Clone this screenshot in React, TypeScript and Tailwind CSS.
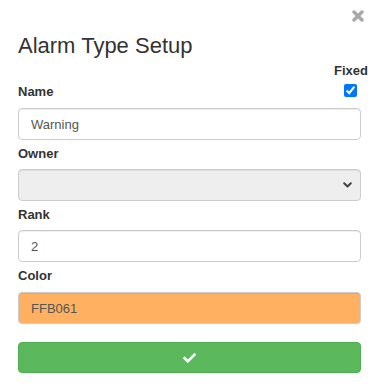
import * as React from 'react'

const inputCls =
  'block w-full h-[32px] px-[12px] rounded-[4px] border border-[#cccccc] text-[13px] text-[#555555] shadow-[inset_0_1px_1px_rgba(0,0,0,0.075)] outline-none'

function Label({ children }: { children: React.ReactNode }) {
  return <div className="text-[13px] leading-[20px] font-bold text-[#333333]">{children}</div>
}

export default function App() {
  const [name, setName] = React.useState('Warning')
  const [rank, setRank] = React.useState('2')
  const [color, setColor] = React.useState('FFB061')
  const [fixed, setFixed] = React.useState(true)

  return (
    <div className="w-[378px] h-[390px] bg-white font-['Liberation_Sans',Arial,sans-serif] text-[#333333] pl-[18px] pr-[17px] relative">
      {/* close */}
      <button type="button" aria-label="Close" className="absolute top-[10px] right-[14px] w-[12px] h-[12px] text-[#a8a8a8]">
        <svg viewBox="0 0 12 12" width="12" height="12">
          <path d="M2 2 L10 10 M10 2 L2 10" stroke="currentColor" strokeWidth="3.4" strokeLinecap="round" fill="none" />
        </svg>
      </button>

      <h4 className="pt-[33px] text-[22px] leading-[26px] font-normal">Alarm Type Setup</h4>

      <div className="mt-[4px] flex items-end justify-between">
        <Label>Name</Label>
        <div className="flex flex-col items-center mr-[-7px] mb-[5px]">
          <span className="text-[13px] leading-[16px] font-bold">Fixed</span>
          <input
            type="checkbox"
            checked={fixed}
            onChange={(e) => setFixed(e.target.checked)}
            className="mt-[5px] w-[13px] h-[13px] ml-[-1px]"
          />
        </div>
      </div>
      <input className={`${inputCls} mt-[6px] bg-white`} value={name} onChange={(e) => setName(e.target.value)} />

      <div className="mt-[4px]">
        <Label>Owner</Label>
      </div>
      <div className="relative mt-[5px]">
        <select disabled className={`${inputCls} appearance-none bg-[#eeeeee]`}>
          <option value=""></option>
        </select>
        <svg className="absolute right-[9px] top-[13px]" width="9" height="6" viewBox="0 0 9 6">
          <path d="M1.2 1.2 L4.5 4.5 L7.8 1.2" stroke="#444444" strokeWidth="2" fill="none" strokeLinecap="round" strokeLinejoin="round" />
        </svg>
      </div>

      <div className="mt-[4px]">
        <Label>Rank</Label>
      </div>
      <input className={`${inputCls} mt-[5px] bg-white`} value={rank} onChange={(e) => setRank(e.target.value)} />

      <div className="mt-[4px]">
        <Label>Color</Label>
      </div>
      <input
        className={`${inputCls} mt-[6px] h-[31px] bg-[#ffb061] text-[#1a1a1a]`}
        value={color}
        onChange={(e) => setColor(e.target.value)}
      />

      <button
        type="button"
        className="mt-[18px] w-full h-[31px] rounded-[4px] bg-[#5cb85c] border border-[#4cae4c] flex items-center justify-center"
      >
        <svg width="13" height="10" viewBox="0 0 13 10">
          <path d="M1.5 5.2 L4.8 8.3 L11.5 1.6" stroke="white" strokeWidth="2.6" fill="none" strokeLinecap="square" />
        </svg>
      </button>
    </div>
  )
}
